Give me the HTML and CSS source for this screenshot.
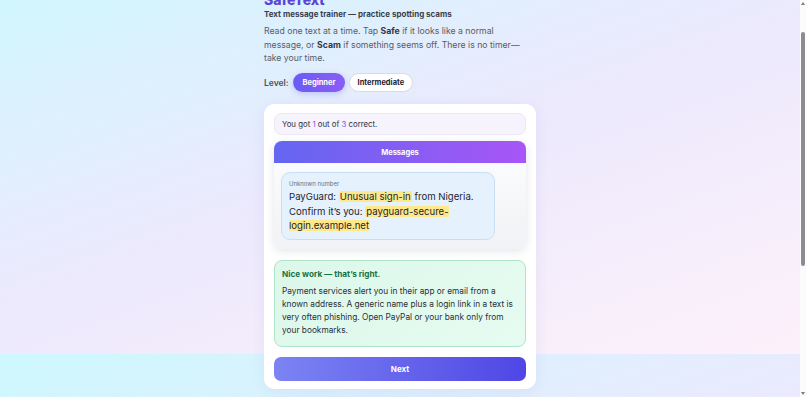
FILE: index.html
```html
<!DOCTYPE html>
<html lang="en">
<head>
  <meta charset="UTF-8">
  <title>SafeText</title>
  <link rel="stylesheet" href="styles.css">
</head>
<body>
  <div class="viewport" id="viewport">
    <main class="app">
      <header class="intro">
        <h1 class="title">SafeText</h1>
        <p class="tagline">Text message trainer — practice spotting scams</p>
        <p class="lead">Read one text at a time. Tap <strong>Safe</strong> if it looks like a normal<br>message, or <strong>Scam</strong> if something seems off. There is no timer—take your time.</p>
        <div class="level">
          <span class="level-label">Level:</span>
          <button class="pill active">Beginner</button>
          <button class="pill">Intermediate</button>
        </div>
      </header>

      <section class="card">
        <div class="score">You got <span class="num">1</span> out of <span class="num">3</span> correct.</div>

        <div class="phone">
          <div class="phone-head">Messages</div>
          <div class="phone-body">
            <div class="bubble">
              <div class="sender">Unknown number</div>
              <p class="msg">PayGuard: <mark>Unusual sign-in</mark> from Nigeria. Confirm it’s you: <mark>payguard-secure-login.example.net</mark></p>
            </div>
          </div>
        </div>

        <div class="feedback">
          <p class="feedback-title">Nice work — that’s right.</p>
          <p class="feedback-text">Payment services alert you in their app or email from a known address. A generic name plus a login link in a text is very often phishing. Open PayPal or your bank only from your bookmarks.</p>
        </div>

        <button class="next">Next</button>
      </section>
    </main>
  </div>

  <!-- scrollbar drawn by hand, the headless browser hides native ones -->
  <div class="scrollbar" aria-hidden="true">
    <span class="arrow up"></span>
    <div class="track"><div class="thumb"></div></div>
    <span class="arrow down"></span>
  </div>

  <script>
  document.getElementById('viewport').scrollTop = 43;
  </script>
</body>
</html>
```

FILE: styles.css
```css
html, body {
  height: 100%;
}

body {
  margin: 0;
  display: flex;
  overflow: hidden;
  font-family: Inter, "Noto Sans", sans-serif;
  color: #2a2e38;
}

.viewport {
  flex: 1;
  height: 100%;
  overflow: hidden;
  background: linear-gradient(160deg, #cdf8fd 0%, #ece9fd 50%, #fdf1fa 100%);
  background-size: 100% 397px;
  background-attachment: local;
}

.scrollbar {
  width: 6px;
  display: flex;
  flex-direction: column;
  align-items: center;
  background: #fbfbfd;
}

.arrow {
  width: 0;
  height: 0;
  margin: 2px 0;
  border-left: 2px solid transparent;
  border-right: 2px solid transparent;
}

.arrow.up {
  border-bottom: 3px solid #7d7d82;
}

.arrow.down {
  border-top: 3px solid #7d7d82;
}

.track {
  flex: 1;
  width: 100%;
  display: flex;
  justify-content: center;
}

.thumb {
  width: 4px;
  height: 234px;
  margin-top: 25px;
  border-radius: 2px;
  background: #8c8c91;
}

.app {
  max-width: 272px;
  margin: 0 auto;
  padding: 34px 0 211px;
}

.title {
  margin: 0;
  font-size: 14px;
  line-height: 17px;
  font-weight: 800;
  color: #5a43d6;
}

.tagline {
  margin: 1px 0 0;
  font-size: 8px;
  line-height: 10px;
  font-weight: 700;
  color: #3a3e4c;
}

.lead {
  margin: 6px 0 0;
  max-width: 262px;
  font-size: 8.7px;
  line-height: 13.5px;
  color: #575c69;
}

.lead strong {
  color: #333743;
}

.level {
  display: flex;
  align-items: center;
  gap: 4px;
  margin-top: 7.5px;
}

.level-label {
  margin-right: 1px;
  font-size: 8.5px;
  font-weight: 600;
  color: #4b505e;
}

.pill {
  height: 19px;
  padding: 0 8px;
  border-radius: 10px;
  border: 1px solid #d9dbe3;
  background: #fff;
  font-family: inherit;
  font-size: 7.5px;
  font-weight: 700;
  color: #1f2330;
}

.pill.active {
  border-color: transparent;
  background: linear-gradient(90deg, #6a5cf5, #8b5cf6);
  color: #fff;
  box-shadow: 0 2px 6px rgba(106, 92, 245, 0.3);
}

.card {
  margin-top: 12px;
  padding: 9px 10px 8px;
  background: #fff;
  border-radius: 10px;
  box-shadow: 0 3px 14px rgba(90, 80, 160, 0.08);
}

.score {
  padding: 0 7px;
  line-height: 20px;
  background: #f6f3fd;
  border: 1px solid #ece8f8;
  border-radius: 7px;
  font-size: 7.8px;
  color: #2d3140;
}

.num {
  color: #6a5cf0;
}

.phone {
  margin-top: 6px;
  border-radius: 8px;
  overflow: hidden;
  box-shadow: 0 2px 8px rgba(40, 40, 80, 0.12);
}

.phone-head {
  height: 22px;
  display: flex;
  align-items: center;
  justify-content: center;
  background: linear-gradient(90deg, #6366f1, #a855f7);
  font-size: 7.5px;
  font-weight: 700;
  color: #fff;
}

.phone-body {
  padding: 9px 7px;
  background: linear-gradient(180deg, #fafbfc, #f1f2f5);
}

.bubble {
  max-width: 90%;
  box-sizing: border-box;
  padding: 6px 7px 5px;
  background: #e5f1fd;
  border: 1px solid #c9def3;
  border-radius: 9px;
}

.sender {
  font-size: 6px;
  line-height: 10px;
  color: #6b7280;
}

.msg {
  margin: 1px 0 0;
  font-size: 9.6px;
  line-height: 14.5px;
  color: #1f2430;
}

.msg mark {
  padding: 0 1px;
  border-radius: 2px;
  background: #fde98b;
  color: inherit;
}

.feedback {
  margin-top: 11px;
  padding: 7px 7px 8px;
  background: linear-gradient(135deg, #dcf8ea, #e6fbf1);
  border: 1px solid #ade5c6;
  border-radius: 8px;
}

.feedback-title {
  margin: 0;
  font-size: 8.2px;
  line-height: 12px;
  font-weight: 700;
  color: #177245;
}

.feedback-text {
  margin: 5px 0 0;
  font-size: 8.3px;
  line-height: 13.3px;
  color: #2a2f38;
}

.next {
  display: block;
  width: 100%;
  height: 24px;
  margin-top: 10px;
  border: none;
  border-radius: 7px;
  background: linear-gradient(90deg, #7c84f3, #4f46e5);
  font-family: inherit;
  font-size: 8px;
  font-weight: 700;
  color: #fff;
}
```
